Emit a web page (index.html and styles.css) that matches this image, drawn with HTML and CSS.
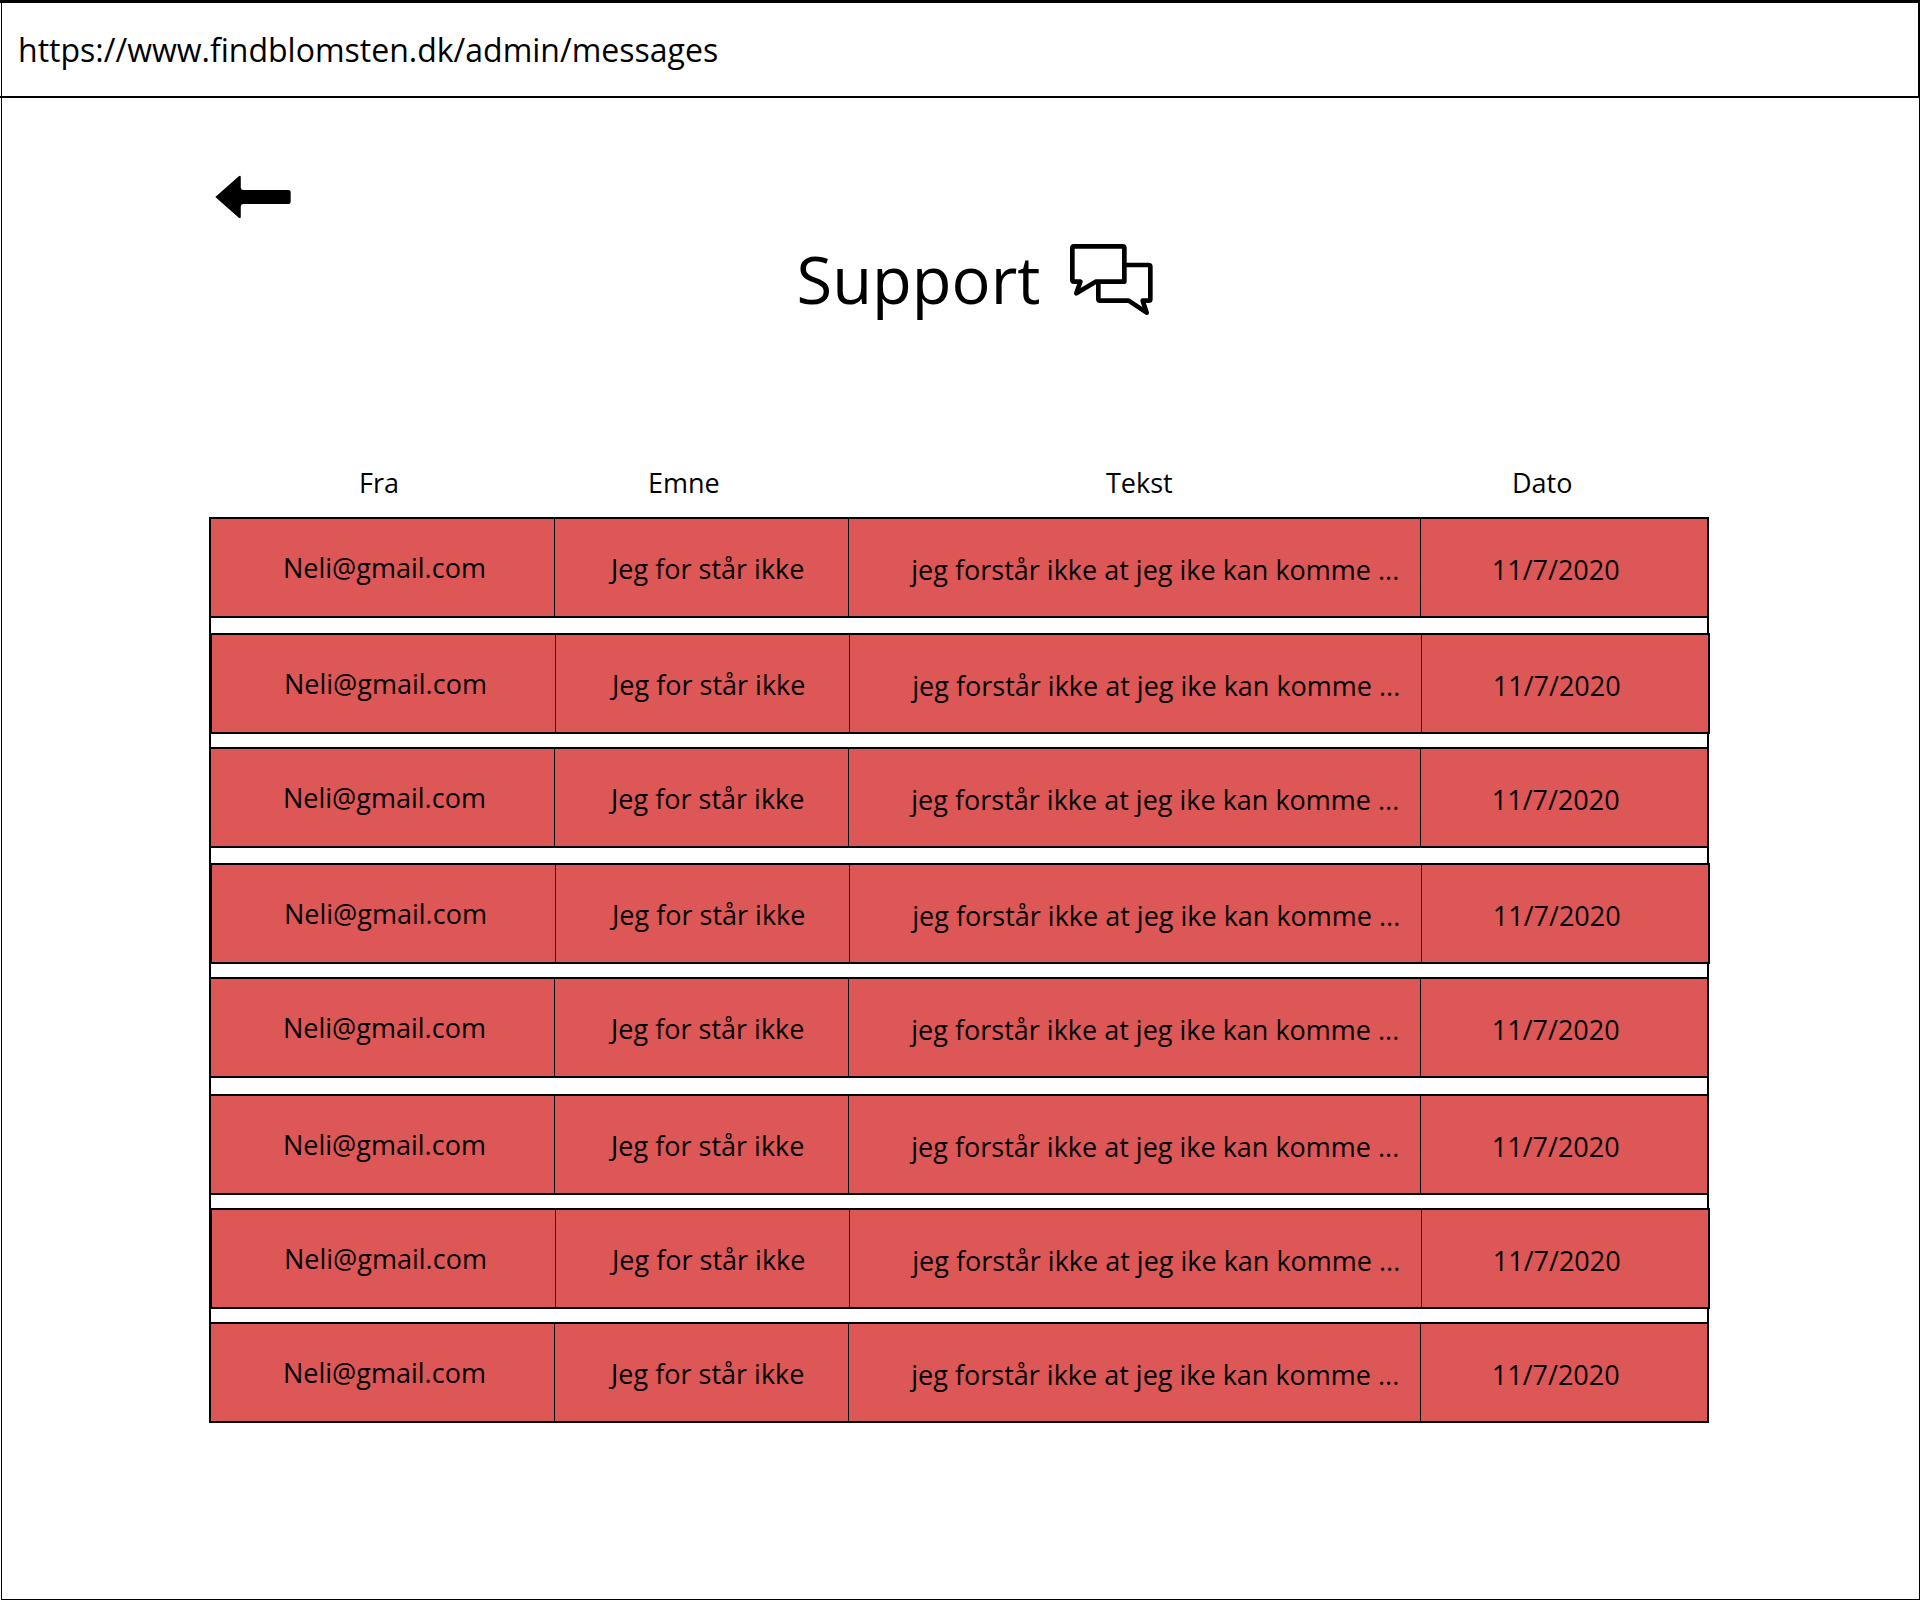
FILE: index.html
```html
<!DOCTYPE html>
<html lang="da">
<head>
<meta charset="utf-8">
<meta name="viewport" content="width=device-width, initial-scale=1">
<title>Support</title>
<link rel="stylesheet" href="styles.css">
</head>
<body>
<div class="window">
  <header class="address-bar">
    <input class="address" type="text" aria-label="Adresse" value="https://www.findblomsten.dk/admin/messages">
  </header>
  <main class="page">
    <a class="back" href="#" aria-label="Tilbage">
      <svg width="76" height="44" viewBox="0 0 230 132" aria-hidden="true"><path d="M1 66 72 3Q78-1 78 6V38Q79 45 86 45H222Q229 45 229 52V80Q229 87 222 87H86Q79 87 78 94V126Q78 133 72 129Z"/></svg>
    </a>
    <h1 class="title">Support
      <svg width="83" height="71" viewBox="0 0 249 213" fill="none" stroke="#000" stroke-width="14" stroke-linejoin="round" aria-hidden="true"><path d="M12 7H158Q163 7 163 12V113H77L19 148 31 113H12Q7 113 7 108V12Q7 7 12 7Z"/><path d="M163 63H236Q241 63 241 68V165Q241 170 236 170H218L230 206 176 170H90Q85 170 85 165V113"/></svg>
    </h1>
    <table class="messages">
      <thead>
        <tr><th class="from">Fra</th><th class="subject">Emne</th><th class="text">Tekst</th><th class="date">Dato</th></tr>
      </thead>
      <tbody>
        <tr><td class="from">Neli@gmail.com</td><td class="subject">Jeg for står ikke</td><td class="text">jeg forstår ikke at jeg ike kan komme ...</td><td class="date">11/7/2020</td></tr>
        <tr class="shifted spaced"><td class="from">Neli@gmail.com</td><td class="subject">Jeg for står ikke</td><td class="text">jeg forstår ikke at jeg ike kan komme ...</td><td class="date">11/7/2020</td></tr>
        <tr><td class="from">Neli@gmail.com</td><td class="subject">Jeg for står ikke</td><td class="text">jeg forstår ikke at jeg ike kan komme ...</td><td class="date">11/7/2020</td></tr>
        <tr class="shifted spaced"><td class="from">Neli@gmail.com</td><td class="subject">Jeg for står ikke</td><td class="text">jeg forstår ikke at jeg ike kan komme ...</td><td class="date">11/7/2020</td></tr>
        <tr><td class="from">Neli@gmail.com</td><td class="subject">Jeg for står ikke</td><td class="text">jeg forstår ikke at jeg ike kan komme ...</td><td class="date">11/7/2020</td></tr>
        <tr class="spaced-wide"><td class="from">Neli@gmail.com</td><td class="subject">Jeg for står ikke</td><td class="text">jeg forstår ikke at jeg ike kan komme ...</td><td class="date">11/7/2020</td></tr>
        <tr class="shifted"><td class="from">Neli@gmail.com</td><td class="subject">Jeg for står ikke</td><td class="text">jeg forstår ikke at jeg ike kan komme ...</td><td class="date">11/7/2020</td></tr>
        <tr><td class="from">Neli@gmail.com</td><td class="subject">Jeg for står ikke</td><td class="text">jeg forstår ikke at jeg ike kan komme ...</td><td class="date">11/7/2020</td></tr>
      </tbody>
    </table>
  </main>
</div>
</body>
</html>
```
FILE: styles.css
```css
* {
  box-sizing: border-box;
}

body {
  margin: 0;
  background: #fff;
  color: #000;
  font: 27px/36px "Open Sans", "Noto Sans", sans-serif;
}

.window {
  display: flex;
  flex-direction: column;
  min-height: 100vh;
}

/* Address bar */
.address-bar {
  display: flex;
  padding-left: 1px;
  border: solid #000;
  border-width: 3px 2px 2px 0;
}

.address {
  flex: 1;
  min-width: 0;
  height: 93px;
  padding: 0 16px;
  border: 0;
  border-left: 1px solid #000;
  outline: 0;
  background: none;
  color: inherit;
  font: inherit;
  font-size: 32px;
}

/* Page */
.page {
  flex: 1;
  margin-left: 1px;
  padding: 77px 210px 80px 207px;
  border: 1px solid #000;
  border-top: 0;
}

.back {
  display: block;
  width: 76px;
  height: 44px;
  margin-left: 6px;
}

.back svg {
  display: block;
}

.title {
  display: flex;
  align-items: center;
  justify-content: center;
  gap: 30px;
  margin: 20px 0 146px;
  padding-left: 32px;
  font-size: 65px;
  font-weight: 400;
  line-height: 80px;
}

/* Messages */
.messages,
.messages thead,
.messages tbody {
  display: block;
}

.messages tr {
  display: grid;
  grid-template-columns: 344fr 295fr 573fr 288fr;
}

.messages th,
.messages td {
  padding: 0;
  font-weight: 400;
  text-align: left;
  white-space: nowrap;
}

.messages thead {
  padding-bottom: 16px;
}

.messages th.from { padding-left: 150px; }
.messages th.subject { padding-left: 95px; }
.messages th.text { padding-left: 258px; }
.messages th.date { padding-left: 91px; }

.messages tbody {
  border: solid #000;
  border-width: 0 2px;
}

.messages tbody tr {
  height: 101px;
  margin: 13px -2px 0;
  border: 2px solid #000;
  background: #de5757;
}

.messages tbody tr:first-child {
  margin-top: 0;
}

.messages tbody .spaced {
  margin-top: 15px;
}

.messages tbody .spaced-wide {
  margin-top: 16px;
}

.messages tbody .shifted {
  margin-right: -3px;
  margin-left: -1px;
}

.messages td {
  display: flex;
  align-items: center;
  border-left: 1px solid #000;
}

.messages td.from {
  padding-left: 72px;
  border-left: 0;
}

.messages td.subject {
  padding: 2px 0 0 56px;
}

.messages td.text {
  padding: 4px 0 0 62px;
}

.messages td.date {
  padding: 4px 0 0 71px;
}
```
